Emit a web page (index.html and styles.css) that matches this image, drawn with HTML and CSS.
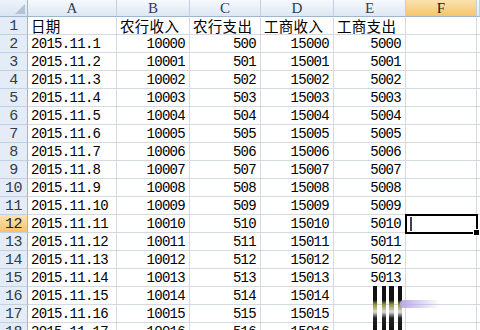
FILE: index.html
```html
<!DOCTYPE html>
<html lang="zh">
<head>
  <meta charset="UTF-8">
  <title>工作表</title>
  <link rel="stylesheet" href="styles.css">
</head>
<body>
  <div class="sheet">
    <div class="corner"><span class="tri"></span></div>
    <div class="colhead">A</div>
    <div class="colhead">B</div>
    <div class="colhead">C</div>
    <div class="colhead">D</div>
    <div class="colhead">E</div>
    <div class="colhead active">F</div>
    <div class="colhead"></div>

    <div class="rowhead">1</div>
    <div class="cell cn">日期</div>
    <div class="cell cn">农行收入</div>
    <div class="cell cn">农行支出</div>
    <div class="cell cn">工商收入</div>
    <div class="cell cn">工商支出</div>
    <div class="cell"></div><div class="cell"></div>

    <div class="rowhead">2</div><div class="cell">2015.11.1</div><div class="cell num">10000</div><div class="cell num">500</div><div class="cell num">15000</div><div class="cell num">5000</div><div class="cell"></div><div class="cell"></div>
    <div class="rowhead">3</div><div class="cell">2015.11.2</div><div class="cell num">10001</div><div class="cell num">501</div><div class="cell num">15001</div><div class="cell num">5001</div><div class="cell"></div><div class="cell"></div>
    <div class="rowhead">4</div><div class="cell">2015.11.3</div><div class="cell num">10002</div><div class="cell num">502</div><div class="cell num">15002</div><div class="cell num">5002</div><div class="cell"></div><div class="cell"></div>
    <div class="rowhead">5</div><div class="cell">2015.11.4</div><div class="cell num">10003</div><div class="cell num">503</div><div class="cell num">15003</div><div class="cell num">5003</div><div class="cell"></div><div class="cell"></div>
    <div class="rowhead">6</div><div class="cell">2015.11.5</div><div class="cell num">10004</div><div class="cell num">504</div><div class="cell num">15004</div><div class="cell num">5004</div><div class="cell"></div><div class="cell"></div>
    <div class="rowhead">7</div><div class="cell">2015.11.6</div><div class="cell num">10005</div><div class="cell num">505</div><div class="cell num">15005</div><div class="cell num">5005</div><div class="cell"></div><div class="cell"></div>
    <div class="rowhead">8</div><div class="cell">2015.11.7</div><div class="cell num">10006</div><div class="cell num">506</div><div class="cell num">15006</div><div class="cell num">5006</div><div class="cell"></div><div class="cell"></div>
    <div class="rowhead">9</div><div class="cell">2015.11.8</div><div class="cell num">10007</div><div class="cell num">507</div><div class="cell num">15007</div><div class="cell num">5007</div><div class="cell"></div><div class="cell"></div>
    <div class="rowhead">10</div><div class="cell">2015.11.9</div><div class="cell num">10008</div><div class="cell num">508</div><div class="cell num">15008</div><div class="cell num">5008</div><div class="cell"></div><div class="cell"></div>
    <div class="rowhead">11</div><div class="cell">2015.11.10</div><div class="cell num">10009</div><div class="cell num">509</div><div class="cell num">15009</div><div class="cell num">5009</div><div class="cell"></div><div class="cell"></div>
    <div class="rowhead active">12</div><div class="cell">2015.11.11</div><div class="cell num">10010</div><div class="cell num">510</div><div class="cell num">15010</div><div class="cell num">5010</div><div class="cell selected"><span class="caret"></span><span class="handle"></span></div><div class="cell"></div>
    <div class="rowhead">13</div><div class="cell">2015.11.12</div><div class="cell num">10011</div><div class="cell num">511</div><div class="cell num">15011</div><div class="cell num">5011</div><div class="cell"></div><div class="cell"></div>
    <div class="rowhead">14</div><div class="cell">2015.11.13</div><div class="cell num">10012</div><div class="cell num">512</div><div class="cell num">15012</div><div class="cell num">5012</div><div class="cell"></div><div class="cell"></div>
    <div class="rowhead">15</div><div class="cell">2015.11.14</div><div class="cell num">10013</div><div class="cell num">513</div><div class="cell num">15013</div><div class="cell num">5013</div><div class="cell"></div><div class="cell"></div>
    <div class="rowhead">16</div><div class="cell">2015.11.15</div><div class="cell num">10014</div><div class="cell num">514</div><div class="cell num">15014</div><div class="cell num"></div><div class="cell"></div><div class="cell"></div>
    <div class="rowhead">17</div><div class="cell">2015.11.16</div><div class="cell num">10015</div><div class="cell num">515</div><div class="cell num">15015</div><div class="cell num"></div><div class="cell"></div><div class="cell"></div>
    <div class="rowhead">18</div><div class="cell">2015.11.17</div><div class="cell num">10016</div><div class="cell num">516</div><div class="cell num">15016</div><div class="cell num"></div><div class="cell"></div><div class="cell"></div>

    <div class="glitch">
      <span class="bar b1"></span>
      <span class="bar b2"></span>
      <span class="bar b3"></span>
      <span class="bar b4"></span>
      <span class="smear"></span>
    </div>
  </div>
</body>
</html>
```

FILE: styles.css
```css
body {
  margin: 0;
  background: #fff;
}
.sheet {
  position: relative;
  width: 480px;
  height: 330px;
  overflow: hidden;
  display: grid;
  grid-template-columns: 28px 89px 73px 71px 73px 72px 71px 3px;
  grid-template-rows: 17px;
  grid-auto-rows: 18px;
  font-family: "Liberation Mono", "Noto Sans CJK SC", monospace;
  font-size: 14px;
  color: #000;
}
.corner, .colhead, .rowhead, .cell {
  box-sizing: border-box;
  border-right: 1px solid #d4d9e2;
  border-bottom: 1px solid #d4d9e2;
  white-space: nowrap;
  overflow: hidden;
}
.corner {
  position: relative;
  background: linear-gradient(#eef3fa, #d9e4f2);
  border-right: 1px solid #9eb6ce;
  border-bottom: 1px solid #9eb6ce;
}
.tri {
  position: absolute;
  right: 2px;
  bottom: 2px;
  width: 0;
  height: 0;
  border-left: 10px solid transparent;
  border-bottom: 10px solid #b4c2d4;
}
.colhead {
  background: linear-gradient(#f6f9fd, #dde7f3);
  border-right-color: #c2d0e2;
  border-bottom: 1px solid #9eb6ce;
  font-family: "Liberation Serif", serif;
  font-size: 15px;
  color: #2d3f55;
  text-align: center;
  line-height: 17px;
}
.rowhead {
  background: #e4ecf7;
  border-right: 1px solid #9eb6ce;
  border-bottom-color: #c2d0e2;
  font-family: "Liberation Mono", monospace;
  font-size: 15px;
  color: #333b47;
  text-align: center;
  line-height: 19px;
  letter-spacing: -0.6px;
}
.colhead.active, .rowhead.active {
  background: linear-gradient(#fbe3b0, #f4c46a);
  color: #222;
}
.cell {
  padding: 0 3px 0 3px;
  line-height: 19px;
  letter-spacing: -0.7px;
  overflow: visible;
}
.cell.num {
  text-align: right;
  padding-right: 4px;
}
.cell.cn {
  font-family: "Noto Sans CJK SC", sans-serif;
  font-size: 14.5px;
  letter-spacing: 0.3px;
  line-height: 18px;
}
.selected {
  position: relative;
  border: 2px solid #000;
  margin: -1px 0 0 -1px;
  width: 73px;
  height: 20px;
  z-index: 2;
}
.caret {
  position: absolute;
  left: 3px;
  top: 1px;
  width: 2px;
  height: 14px;
  background: #444;
}
.handle {
  position: absolute;
  right: -4px;
  bottom: -4px;
  width: 5px;
  height: 5px;
  background: #000;
  border: 1px solid #fff;
}
.glitch {
  position: absolute;
  left: 342px;
  top: 286px;
  width: 100px;
  height: 44px;
}
.bar {
  position: absolute;
  top: 0;
  width: 4px;
  height: 44px;
  background: linear-gradient(#111 0, #111 14px, #8a8a3a 18px, #ddd 26px, #222 32px, #111 44px);
}
.b1 { left: 31px; }
.b2 { left: 40px; }
.b3 { left: 47px; width: 5px; }
.b4 { left: 56px; }
.smear {
  position: absolute;
  left: 58px;
  top: 14px;
  width: 40px;
  height: 8px;
  border-radius: 4px;
  background: linear-gradient(90deg, #b9a8e6, rgba(220, 210, 250, 0));
}
```
